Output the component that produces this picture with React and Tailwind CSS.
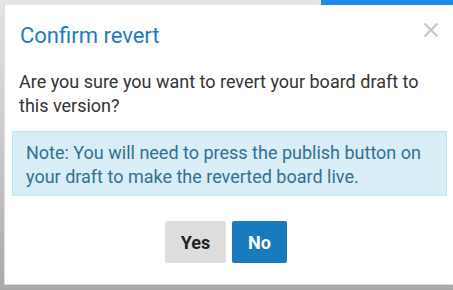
import React from "react";

export default function App() {
  return (
    <div
      className="w-[453px] h-[290px] overflow-hidden flex flex-col bg-linear-to-b from-[#e4e4e4] via-[#c9c9c9] to-[#a9a9a9]"
      style={{ fontFamily: "Roboto, 'Noto Sans', sans-serif" }}
    >
      <div className="h-[5px] flex shrink-0">
        <div className="flex-1 bg-[#e4e4e4]" />
        <div className="w-[132px] bg-[#1e88e5]" />
      </div>
      <div className="ml-[4px] w-[449px] bg-white border-l border-b border-[#dcdcdc] flex flex-col pb-[21px]">
        <div className="flex items-start justify-between pl-[15px] pr-[14px] pt-[17px]">
          <h2 className="text-[22px] leading-[28px] text-[#1c7cc0] font-normal">Confirm revert</h2>
          <svg width="16" height="16" viewBox="0 0 16 16" className="mt-[0px]">
            <path d="M1.5 1.5 L14.5 14.5 M14.5 1.5 L1.5 14.5" stroke="#c9c9c9" strokeWidth="2.4" strokeLinecap="butt" />
          </svg>
        </div>
        <p className="mt-[20px] px-[14px] text-[18px] leading-[23.5px] text-[#333333]">
          Are you sure you want to revert your board draft to this version?
        </p>
        <div className="mt-[14px] ml-[7px] mr-[6px] border border-[#bce8f1] bg-[#d9edf7] pl-[13px] pr-[10px] pt-[9px] pb-[6px] text-[18px] leading-[24px] text-[#31708f]">
          Note: You will need to press the publish button on your draft to make the reverted board live.
        </div>
        <div className="mt-[25px] flex justify-center gap-[6px] pr-[6px]">
          <button className="h-[42px] w-[61px] rounded-[2px] bg-[#dddddd] text-[18px] font-bold text-[#222222]">Yes</button>
          <button className="h-[42px] w-[55px] rounded-[2px] bg-[#1a7abf] text-[18px] font-bold text-white">No</button>
        </div>
      </div>
    </div>
  );
}
